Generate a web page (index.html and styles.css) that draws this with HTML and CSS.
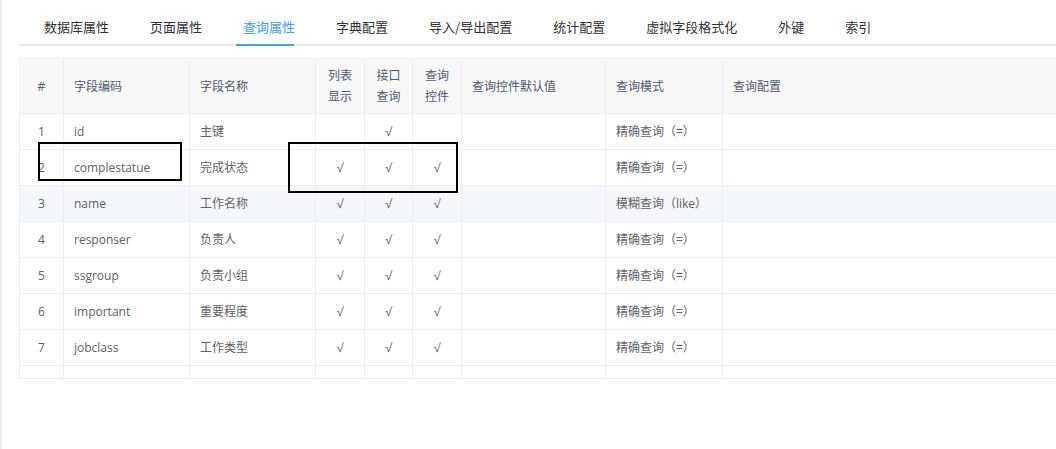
FILE: index.html
```html
<!DOCTYPE html>
<html lang="zh-CN">
<head>
<meta charset="utf-8">
<title>查询属性</title>
<link rel="stylesheet" href="styles.css">
</head>
<body>
<div class="page">
  <div class="tabs">
    <div class="tab">数据库属性</div>
    <div class="tab">页面属性</div>
    <div class="tab active">查询属性</div>
    <div class="tab">字典配置</div>
    <div class="tab">导入/导出配置</div>
    <div class="tab">统计配置</div>
    <div class="tab">虚拟字段格式化</div>
    <div class="tab">外键</div>
    <div class="tab">索引</div>
  </div>
  <table class="grid">
    <colgroup>
      <col class="c-no"><col class="c-code"><col class="c-name"><col class="c-chk"><col class="c-chk2"><col class="c-chk"><col class="c-def"><col class="c-mode"><col class="c-cfg">
    </colgroup>
    <thead>
      <tr>
        <th class="center">#</th>
        <th>字段编码</th>
        <th>字段名称</th>
        <th class="center">列表<br>显示</th>
        <th class="center">接口<br>查询</th>
        <th class="center">查询<br>控件</th>
        <th>查询控件默认值</th>
        <th>查询模式</th>
        <th>查询配置</th>
      </tr>
    </thead>
    <tbody>
      <tr><td class="center">1</td><td>id</td><td>主键</td><td class="center"></td><td class="center">√</td><td class="center"></td><td></td><td>精确查询（=）</td><td></td></tr>
      <tr><td class="center">2</td><td>complestatue</td><td>完成状态</td><td class="center">√</td><td class="center">√</td><td class="center">√</td><td></td><td>精确查询（=）</td><td></td></tr>
      <tr class="hover"><td class="center">3</td><td>name</td><td>工作名称</td><td class="center">√</td><td class="center">√</td><td class="center">√</td><td></td><td>模糊查询（like）</td><td></td></tr>
      <tr><td class="center">4</td><td>responser</td><td>负责人</td><td class="center">√</td><td class="center">√</td><td class="center">√</td><td></td><td>精确查询（=）</td><td></td></tr>
      <tr><td class="center">5</td><td>ssgroup</td><td>负责小组</td><td class="center">√</td><td class="center">√</td><td class="center">√</td><td></td><td>精确查询（=）</td><td></td></tr>
      <tr><td class="center">6</td><td>important</td><td>重要程度</td><td class="center">√</td><td class="center">√</td><td class="center">√</td><td></td><td>精确查询（=）</td><td></td></tr>
      <tr><td class="center">7</td><td>jobclass</td><td>工作类型</td><td class="center">√</td><td class="center">√</td><td class="center">√</td><td></td><td>精确查询（=）</td><td></td></tr>
      <tr class="spacer"><td></td><td></td><td></td><td></td><td></td><td></td><td></td><td></td><td></td></tr>
    </tbody>
  </table>
  <div class="mark mark-a"></div>
  <div class="mark mark-b"></div>
</div>
</body>
</html>
```
FILE: styles.css
```css
* { box-sizing: border-box; }
html, body { margin: 0; padding: 0; background: #fff; }
body {
  font-family: "Open Sans", "Noto Sans CJK SC", sans-serif;
  color: #606266;
}
.page {
  position: relative;
  width: 1056px;
  height: 449px;
  overflow: hidden;
  border-left: 2px solid #ebebeb;
  padding-left: 17px;
}
.tabs {
  display: flex;
  width: 1037px;
  height: 46px;
  padding-top: 10px;
  padding-left: 4.5px;
  border-bottom: 2px solid #e4e7ed;
}
.tab {
  position: relative;
  padding: 0 20.5px;
  height: 34px;
  line-height: 34px;
  font-size: 13px;
  color: #303133;
  font-family: "Noto Sans CJK SC", sans-serif;
  white-space: nowrap;
}
.tab.active { color: #409eff; }
.tab.active::after {
  content: "";
  position: absolute;
  left: 13.5px;
  width: 58px;
  bottom: -2px;
  height: 2px;
  background: #409eff;
}
.grid {
  margin-top: 12px;
  width: 1045px;
  border-collapse: collapse;
  table-layout: fixed;
  font-size: 12px;
}
.c-no { width: 44px; }
.c-code { width: 126px; }
.c-name { width: 126px; }
.c-chk { width: 49px; }
.c-chk2 { width: 48px; }
.c-def { width: 144px; }
.c-mode { width: 117px; }
.c-cfg { width: 391px; }
.grid th, .grid td {
  border: 1px solid #ebeef5;
  padding: 0 10px;
  text-align: left;
  white-space: nowrap;
}
.grid th {
  height: 55px;
  background: #f8f8f9;
  color: #515a6e;
  font-weight: normal;
  line-height: 21px;
}
.grid td {
  height: 36px;
  line-height: 20px;
}
.grid .center { text-align: center; padding: 0; }
.grid tr.hover td { background: #f5f7fa; }
.grid tr.spacer td { height: 13px; }
.mark {
  position: absolute;
  border: 2px solid #000;
}
.mark-a { left: 36px; top: 142px; width: 144px; height: 39px; }
.mark-b { left: 286px; top: 142px; width: 170px; height: 51px; }
```
